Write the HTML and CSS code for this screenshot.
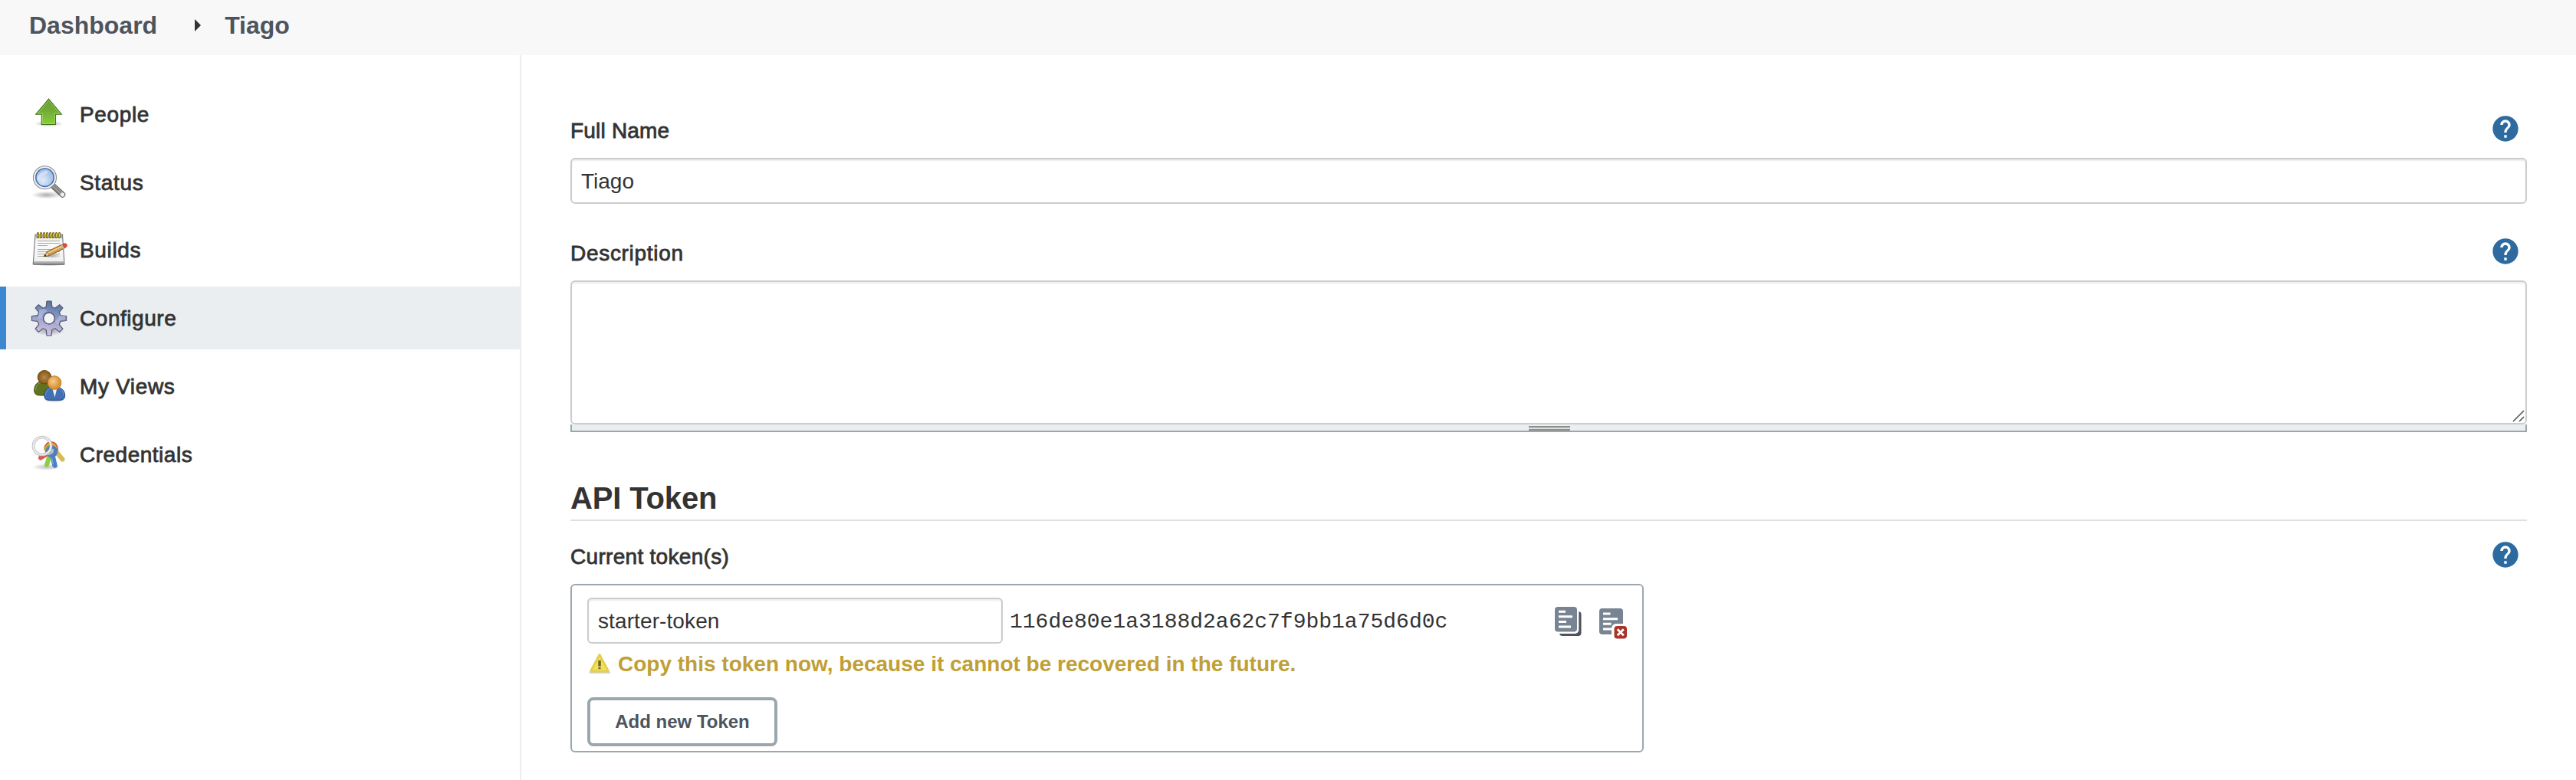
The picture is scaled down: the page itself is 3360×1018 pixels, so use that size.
FILE: index.html
```html
<!DOCTYPE html>
<html lang="en">
<head>
<meta charset="utf-8">
<title>Tiago</title>
<link rel="stylesheet" href="styles.css">
</head>
<body>
<svg class="defs" width="0" height="0" aria-hidden="true">
  <defs>
    <radialGradient id="shade"><stop offset="0" stop-color="#000" stop-opacity=".32"/><stop offset="1" stop-color="#000" stop-opacity="0"/></radialGradient>
    <linearGradient id="green" x1="0" y1="0" x2="0" y2="1"><stop offset="0" stop-color="#6a9c3c"/><stop offset=".5" stop-color="#72ae34"/><stop offset="1" stop-color="#86cf3a"/></linearGradient>
    <radialGradient id="glass" cx=".4" cy=".65"><stop offset="0" stop-color="#e3edfa"/><stop offset="1" stop-color="#a9c3e8"/></radialGradient>
    <linearGradient id="paper" x1="0" y1="0" x2="0" y2="1"><stop offset="0" stop-color="#e2e2e2"/><stop offset=".3" stop-color="#fafafa"/><stop offset="1" stop-color="#efefef"/></linearGradient>
    <linearGradient id="steel" x1=".6" y1="0" x2=".4" y2="1"><stop offset="0" stop-color="#56709c"/><stop offset=".4" stop-color="#8597be"/><stop offset=".65" stop-color="#adabd0"/><stop offset="1" stop-color="#d3c4e2"/></linearGradient>
    <radialGradient id="brown"><stop offset="0" stop-color="#b58a4a"/><stop offset="1" stop-color="#835818"/></radialGradient>
    <radialGradient id="skin" cx=".4" cy=".4"><stop offset="0" stop-color="#f3cd92"/><stop offset="1" stop-color="#dc9433"/></radialGradient>
    <symbol id="help" viewBox="0 0 24 24"><path fill="#2d6a9f" d="M12 2C6.48 2 2 6.48 2 12s4.480 10 10 10 10-4.480 10-10S17.520 2 12 2zm1 17h-2v-2h2v2zm2.070-7.750-.9.920C13.450 12.900 13 13.500 13 15h-2v-.5c0-1.100.45-2.100 1.170-2.830l1.240-1.260c.37-.36.59-.86.59-1.410 0-1.100-.9-2-2-2s-2 .9-2 2H8c0-2.210 1.790-4 4-4s4 1.790 4 4c0 .88-.36 1.680-.93 2.250z"/></symbol>
  </defs>
</svg>

<header class="breadcrumbs">
  <a class="crumb">Dashboard</a>
  <span class="crumb-arrow"></span>
  <a class="crumb">Tiago</a>
</header>

<div class="page">
  <nav class="tasks">
    <a class="task">
      <svg class="task-icon" viewBox="0 0 48 48"><ellipse cx="23.500" cy="36.500" rx="19" ry="4" fill="url(#shade)"/><path d="M23.500 4.200 40.300 24.200h-7.800v13.300H14.300V24.200H6.700z" fill="url(#green)" stroke="#417512" stroke-width="1.100"/><path d="M23.500 6 38 23.100h-6.500v13.300H15.400V23.100H9z" fill="none" stroke="#b5dc8c" stroke-width=".8" opacity=".8"/></svg>
      <span class="task-label">People</span>
    </a>
    <a class="task">
      <svg class="task-icon" viewBox="0 0 48 48"><ellipse cx="21" cy="40.500" rx="20" ry="5" fill="url(#shade)"/><path d="m29 28.500 12.500 11.500" stroke="#555" stroke-width="7.500" stroke-linecap="round"/><path d="m29 28.500 12.500 11.500" stroke="#aaa" stroke-width="5.700" stroke-linecap="round"/><path d="m29.500 27.500 10.500 10M28 30l10 9.500" stroke="#777" stroke-width="1.200"/><circle cx="41.500" cy="40" r="2.600" fill="#eee"/><circle cx="18.500" cy="17.700" r="15" fill="#f3f3f1" stroke="#8b8b88" stroke-width="1.100"/><circle cx="18.500" cy="17.700" r="11.700" fill="url(#glass)" stroke="#426fb5" stroke-width="1.600"/><path d="M10 21c1-8 7-8.500 12-11" fill="none" stroke="#edf3fc" stroke-width="4" opacity=".5"/></svg>
      <span class="task-label">Status</span>
    </a>
    <a class="task">
      <svg class="task-icon" viewBox="0 0 48 48"><ellipse cx="24" cy="43" rx="21" ry="2.500" fill="url(#shade)"/><path d="M6 4h35.500l2.500 38.700H3.200z" fill="url(#paper)" stroke="#777" stroke-width="1.100"/><path d="M4 39.300h39.600v2.400H4z" fill="#aaa"/><path d="M3.500 42.800H44" stroke="#555" stroke-width="1.200"/><path d="M6.500 4.500h34.500v4H6.500z" fill="#aaa"/><path d="M9.500 12.500h28.500M9 15.500h29M9 18.500h13M9 23.500h29M9 26.500h29M9 29.500h29M9 32.500h15" stroke="#aaa" stroke-width="1"/><path d="M9.500 2.500v5m4-5v5m4-5v5m4-5v5m4-5v5m4-5v5m4-5v5m4-5v5" stroke="#6c5900" stroke-width="3" stroke-linecap="round"/><path d="M9.500 2.500v5m4-5v5m4-5v5m4-5v5m4-5v5m4-5v5m4-5v5m4-5v5" stroke="#f0db46" stroke-width="1.400"/><ellipse cx="28" cy="32" rx="12" ry="3" fill="url(#shade)"/><path d="m17.500 32.500 4-6L41 17l3 5-19.500 9.500z" fill="#d6a04a" stroke="#805415" stroke-width="1"/><path d="m22 28.500 20-9.500" stroke="#f3d190" stroke-width="1.500"/><path d="m17.300 32.600 4.200-6 3 5z" fill="#ebcc93" stroke="#805415" stroke-width=".7"/><path d="m17 33 2-3 1.500 2.300z" fill="#222"/><path d="m39.500 18 2.500-1.200 3 4.900-2.500 1.300z" fill="#bbb"/><path d="m41.500 17 2.500-1.200c3-.6 4.500 3 2.300 4.700l-2 1.200z" fill="#e24b3c" stroke="#a13b25" stroke-width=".7"/></svg>
      <span class="task-label">Builds</span>
    </a>
    <a class="task task-active">
      <svg class="task-icon" viewBox="0 0 48 48"><ellipse cx="24" cy="41" rx="20" ry="6" fill="url(#shade)"/><g transform="translate(24 24.500)"><path d="M-3.800-15-3-22.500H3L3.800-15 7.900-13.300 13.700-17.900 17.900-13.700 13.300-7.900 15-3.800 22.500-3V3L15 3.800 13.300 7.900 17.900 13.700 13.700 17.900 7.900 13.300 3.800 15 3 22.500H-3L-3.800 15-7.900 13.300-13.700 17.900-17.900 13.700-13.300 7.900-15 3.800-22.500 3V-3L-15-3.800-13.300-7.900-17.900-13.700-13.700-17.900-7.900-13.300zM0-7.300A7.300 7.300 0 1 0 0 7.300 7.300 7.300 0 1 0 0-7.300z" fill="url(#steel)" fill-rule="evenodd" stroke="#50577a" stroke-width="1.200" stroke-linejoin="round"/><path d="M-13-10C-9-14-5-13-2-9-6-9-9-5-9-1l-5 2z" fill="#ccd3e8" opacity=".45"/><path d="M8 3c3-1 5-4 5-7h8v5l-7 2-3 5z" fill="#d4cfea" opacity=".4"/><circle r="7" fill="#f3f5f7"/><circle r="7.300" fill="none" stroke="#50577a" stroke-width="1.200"/></g></svg>
      <span class="task-label">Configure</span>
    </a>
    <a class="task">
      <svg class="task-icon" viewBox="0 0 48 48"><ellipse cx="31" cy="42" rx="14" ry="3.500" fill="url(#shade)"/><path d="M4.700 29C5 21 10 17.500 17 17.500S30 22 30 29v2c0 4-3 5-7 5H12c-5 0-7.300-2-7.300-7z" fill="#60731f" stroke="#3d4a0e"/><path d="M6.500 29.500c0-6 3-9.500 7-10" stroke="#8e9f4b" fill="none"/><circle cx="18" cy="12.300" r="8.800" fill="url(#brown)" stroke="#6c4813"/><path d="M17.800 36C18 28 23 24.500 31 24.500S44.500 29 44.700 36c0 4-2 6.300-6.700 6.300H24c-4.500 0-6.200-2-6.200-6.300z" fill="#4270b5" stroke="#234a87"/><path d="M19.500 36c0-6 4-9.500 8-9.700M43 36c0-6-4-9.500-8-9.700" stroke="#7799d0" fill="none"/><path d="M28 26h6.500L31.500 38.500z" fill="#f6f6f6"/><circle cx="31" cy="19.500" r="8.800" fill="url(#skin)" stroke="#bd7a22"/></svg>
      <span class="task-label">My Views</span>
    </a>
    <a class="task">
      <svg class="task-icon" viewBox="0 0 48 48"><ellipse cx="21" cy="41.500" rx="19" ry="4.500" fill="url(#shade)" opacity=".8"/><g fill="none" stroke-linecap="round"><path d="m24 23-11 6.500" stroke="#d95a52" stroke-width="6"/><path d="m32 20 9.500 11.500" stroke="#d8bb52" stroke-width="6"/><path d="M25 26 21 38.500" stroke="#8bd044" stroke-width="6"/><path d="M18.500 18c1-12 16-12 16.500 1" stroke="#cf5d45" stroke-width="2.500"/><path d="M19 20c1-12 14.500-12 15 1" stroke="#d6ae3d" stroke-width="2.200"/><path d="M20 21c1-10 13-10 13 1" stroke="#6dac43" stroke-width="2.500"/><circle cx="27.500" cy="21.500" r="4.800" stroke="#4d7fbd" stroke-width="6"/><path d="m28.500 27 3 12.500" stroke="#4f81c2" stroke-width="6.500"/><path d="m27.500 30 1.800 8" stroke="#7ba5da" stroke-width="1.200"/><circle cx="15" cy="14" r="11.500" stroke="#b5b5b5" stroke-width="3.600"/><circle cx="15" cy="14" r="11.500" stroke="#ececec" stroke-width="2.200"/><path d="M23 25c4-1 6-3 6-6" stroke="#b9c0c5" stroke-width="2.500"/></g></svg>
      <span class="task-label task-label-last">Credentials</span>
    </a>
  </nav>

  <main class="form">
    <div class="field-head"><label class="label label-name" for="fullname">Full Name</label><svg class="help"><use href="#help"/></svg></div>
    <input class="input" id="fullname" value="Tiago">

    <div class="field-head field-next"><label class="label label-desc" for="desc">Description</label><svg class="help"><use href="#help"/></svg></div>
    <div class="area">
      <textarea class="input textarea" id="desc"></textarea>
      <svg class="grip" viewBox="0 0 16 16"><path d="M1 15 15 1M9 15l6-6" stroke="#555" stroke-width="1.600"/></svg>
    </div>
    <div class="resizer"><span class="resizer-bar"></span></div>

    <h2 class="section-title">API Token</h2>

    <div class="field-head field-token"><span class="label">Current token(s)</span><svg class="help"><use href="#help"/></svg></div>
    <div class="token-box">
      <div class="token-row">
        <input class="input token-name" value="starter-token">
        <code class="token-value">116de80e1a3188d2a62c7f9bb1a75d6d0c</code>
        <svg class="copy-icon" viewBox="0 0 36 40"><rect x="6" y="6" width="28.500" height="32" rx="4" fill="#4d545d"/><rect x="-2" y="-2" width="33.300" height="37" rx="5" fill="#fff"/><rect width="29" height="32.500" rx="4" fill="#788491"/><path d="M5 6.200h9M5 12.800h18M5 19.500h10M5 26h16" stroke="#fff" stroke-width="3"/></svg>
        <svg class="delete-icon" viewBox="0 0 36 40"><rect width="31" height="34" rx="4" fill="#788491"/><path d="M5 7h9.500M5 13.700h19M5 20.300h10.500M5 27h12" stroke="#fff" stroke-width="3"/><rect x="16" y="20" width="24" height="24" rx="6" fill="#fff"/><rect x="19.500" y="23" width="16.500" height="16.500" rx="4" fill="#a8352a"/><path d="m23.700 27.200 8.100 8.100m0-8.100-8.100 8.100" stroke="#fff" stroke-width="2.800"/></svg>
      </div>
      <div class="warning">
        <svg class="warning-icon" viewBox="0 0 28 28"><path d="M2 25.800h25" stroke="#000" stroke-opacity=".18" stroke-width="2.500" stroke-linecap="round"/><path d="M14 2.500 25.500 24H2.500z" fill="#f1e058" stroke="#e5cf52" stroke-width="3" stroke-linejoin="round"/><path d="M12.300 10h3.500v7.500h-3.500zM12.500 18.800h3v2.500h-3z" fill="#6e662f"/></svg>
        <span class="warning-text">Copy this token now, because it cannot be recovered in the future.</span>
      </div>
      <button class="button">Add new Token</button>
    </div>
  </main>
</div>
</body>
</html>
```
FILE: styles.css
```css
* { box-sizing: border-box; }

body {
  margin: 0;
  background: #fff;
  color: #333;
  font-family: "Liberation Sans", Arial, sans-serif;
  font-size: 28px;
  overflow: hidden;
}

.defs { position: absolute; }

.breadcrumbs {
  display: flex;
  align-items: center;
  height: 72px;
  padding: 0 38px 6px;
  background: #f8f8f8;
  color: #4d545d;
  font-size: 32px;
  font-weight: bold;
}

.crumb-arrow {
  margin: 0 31px 0 49px;
  border: solid transparent;
  border-width: 8px 0 8px 8px;
  border-left-color: #333;
}

.page { display: flex; height: 946px; }

.tasks {
  display: flex;
  flex-direction: column;
  gap: 6.67px;
  width: 680px;
  padding-top: 36px;
  border-right: 2px solid #eaeef1;
}

.task {
  display: flex;
  align-items: center;
  gap: 16px;
  height: 82px;
  padding-left: 32px;
  border-left: 8px solid transparent;
}

.task-active {
  background: #eaeef1;
  border-left-color: #3b87d0;
}

.task-icon { width: 48px; height: 48px; }

.task-label {
  padding-top: 2px;
  letter-spacing: .65px;
  -webkit-text-stroke: .8px #333;
}

.task-active .task-label { padding-top: 3px; letter-spacing: .55px; }
.task-label-last { padding-top: 4px; letter-spacing: .5px; }

.form { flex: 1; padding: 78px 64px 0; }

.field-head {
  display: flex;
  justify-content: space-between;
  height: 40px;
  margin-bottom: 16px;
  padding-right: 8px;
}

.field-next { margin-top: 44px; }
.field-token { margin-top: 26px; }

.label {
  line-height: 42px;
  letter-spacing: .3px;
  -webkit-text-stroke: .8px #333;
}

.label-name { letter-spacing: .2px; }
.label-desc { letter-spacing: .7px; }

.help { width: 40px; height: 40px; margin-top: -2px; }

.input {
  display: block;
  width: 100%;
  height: 60px;
  padding: 2px 12px 0;
  border: 2px solid #ccc;
  border-radius: 6px;
  background: #fff;
  box-shadow: inset 0 2px 2px rgba(0, 0, 0, .075);
  color: #333;
  font: 28px "Liberation Sans", Arial, sans-serif;
}

.area { position: relative; }

.textarea { height: 188px; resize: none; }

.grip {
  position: absolute;
  right: 3px;
  bottom: 3px;
  width: 16px;
  height: 16px;
}

.resizer {
  display: flex;
  justify-content: center;
  height: 10px;
  padding: 2px 0 0 2px;
  border: solid #9ba7af;
  border-width: 0 2px 2px;
  background: #eaeef1;
}

.resizer-bar {
  width: 54px;
  height: 6px;
  border: solid #8b918b;
  border-width: 2px 0;
  background: #dcdfdc;
}

.section-title {
  margin: 62px 0 0;
  padding-bottom: 4px;
  border-bottom: 2px solid #e0e0e0;
  font-size: 40px;
  line-height: 48px;
  letter-spacing: -.15px;
}

.token-box {
  width: 1400px;
  height: 220px;
  padding: 16px 20px 6px;
  border: 2px solid #9ba7af;
  border-radius: 6px;
}

.token-row { display: flex; height: 60px; }

.token-name { width: 542px; letter-spacing: .1px; }

.token-value {
  width: 710px;
  padding-left: 9px;
  font: 28px/64px "Liberation Mono", "Courier New", monospace;
}

.copy-icon { width: 36px; height: 40px; margin: 12px 22px 0 10px; }
.delete-icon { width: 36px; height: 40px; margin-top: 14px; }

.warning {
  display: flex;
  align-items: center;
  gap: 10px;
  height: 40px;
  margin-top: 6px;
  padding-left: 2px;
  color: #c09f36;
  font-weight: bold;
}

.warning-icon { width: 28px; height: 28px; }
.warning-text { padding-top: 1px; }

.button {
  display: block;
  width: 248px;
  height: 64px;
  margin-top: 24px;
  padding: 0;
  border: 4px solid #9ba7af;
  border-radius: 8px;
  background: #fff;
  color: #4d545d;
  font: bold 24px "Liberation Sans", Arial, sans-serif;
  white-space: nowrap;
}
```
